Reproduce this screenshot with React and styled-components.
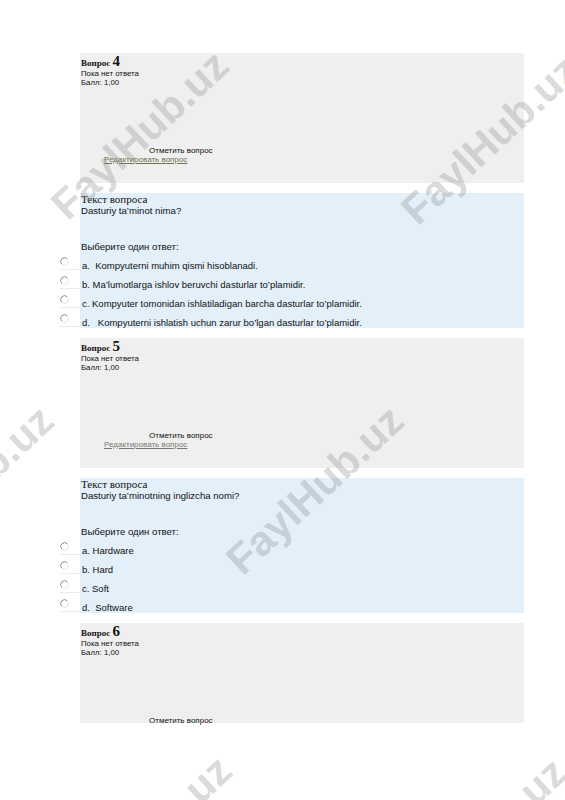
import React from 'react'
import styled, { createGlobalStyle } from 'styled-components'

const GlobalStyle = createGlobalStyle`
  body {
    margin: 0;
    background: #fff;
    font-family: "Liberation Sans", Arial, sans-serif;
    color: #111;
  }
`

const questions = [
  {
    num: 4,
    linkColor: '#6c744f',
    text: 'Dasturiy ta\u2019minot nima?',
    options: [
      'a.  Kompyuterni muhim qismi hisoblanadi.',
      'b. Ma\u2019lumotlarga ishlov beruvchi dasturlar to\u2019plamidir.',
      'c. Kompyuter tomonidan ishlatiladigan barcha dasturlar to\u2019plamidir.',
      'd.   Kompyuterni ishlatish uchun zarur bo\u2019lgan dasturlar to\u2019plamidir.',
    ],
  },
  {
    num: 5,
    linkColor: '#7a7a72',
    text: 'Dasturiy ta\u2019minotning inglizcha nomi?',
    options: ['a. Hardware', 'b. Hard', 'c. Soft', 'd.  Software'],
  },
]

const marks = [
  { x: 140, y: 135 },
  { x: 490, y: 140 },
  { x: -35, y: 490 },
  { x: 315, y: 490 },
  { x: 143, y: 840 },
  { x: 478, y: 842 },
]

export default function App() {
  return (
    <>
      <GlobalStyle />
      <Page>
        {questions.map(q => (
          <React.Fragment key={q.num}>
            <InfoPanel num={q.num} linkColor={q.linkColor} />
            <QuestionPanel>
              <Caption>Текст вопроса</Caption>
              <QText>{q.text}</QText>
              <Prompt>Выберите один ответ:</Prompt>
              <Options>
                {q.options.map(o => (
                  <Option key={o}>
                    <RadioCell><Radio /></RadioCell>
                    <OptionText>{o}</OptionText>
                  </Option>
                ))}
              </Options>
            </QuestionPanel>
          </React.Fragment>
        ))}
        <InfoPanel num={6} short />
        {marks.map((m, i) => (
          <Watermark key={i} style={{ left: m.x, top: m.y }}>FaylHub.uz</Watermark>
        ))}
      </Page>
    </>
  )
}

const InfoPanel = ({ num, linkColor, short }) => (
  <Info $short={short}>
    <Heading>Вопрос <Num>{num}</Num></Heading>
    <Small>Пока нет ответа</Small>
    <Small>Балл: 1,00</Small>
    <Flag>Отметить вопрос</Flag>
    {!short && <EditLink $color={linkColor}>Редактировать вопрос</EditLink>}
  </Info>
)

const Radio = () => (
  <svg width="9" height="9" viewBox="0 0 9 9">
    <circle cx="4.5" cy="4.5" r="3.8" fill="#fff" />
    <path d="M7.2 1.8 A3.8 3.8 0 0 0 1.8 7.2" fill="none" stroke="#8a8a8a" strokeWidth="1" />
    <path d="M1.8 7.2 A3.8 3.8 0 0 0 7.2 1.8" fill="none" stroke="#e2e2e2" strokeWidth="1" />
  </svg>
)

const Page = styled.div`
  position: relative;
  height: 800px;
  overflow: hidden;
  padding: 53px 0 0 80px;
  box-sizing: border-box;
  display: flex;
  flex-direction: column;
  gap: 10px;
`

const Info = styled.div`
  width: 444px;
  height: ${p => (p.$short ? '100px' : '130px')};
  flex-shrink: 0;
  box-sizing: border-box;
  background: #efefef;
  padding: 2px 0 0 1px;
`

const Heading = styled.div`
  font-family: "Liberation Serif", "Times New Roman", serif;
  font-weight: bold;
  font-size: 9px;
  line-height: 12px;
`

const Num = styled.span`
  font-size: 15px;
`

const Small = styled.div`
  font-size: 7.8px;
  line-height: 9px;
`

const Flag = styled.div`
  font-size: 8px;
  line-height: 9px;
  margin-top: 59px;
  padding-left: 68px;
`

const EditLink = styled.div`
  font-size: 8px;
  line-height: 9px;
  padding-left: 23px;
  color: ${p => p.$color};
  text-decoration: underline;
`

const QuestionPanel = styled.div`
  width: 444px;
  height: 135px;
  flex-shrink: 0;
  box-sizing: border-box;
  background: #e3eff9;
  padding: 0 0 0 1px;
`

const Caption = styled.div`
  font-family: "Liberation Serif", "Times New Roman", serif;
  font-size: 11px;
  line-height: 12px;
`

const QText = styled.div`
  font-size: 9.6px;
  line-height: 11px;
`

const Prompt = styled.div`
  font-size: 9.6px;
  line-height: 12px;
  margin-top: 25px;
`

const Options = styled.div`
  display: flex;
  flex-direction: column;
  gap: 5px;
  margin-top: 4px;
`

const Option = styled.div`
  display: flex;
  height: 14px;
  margin-left: -21px;
`

const RadioCell = styled.div`
  width: 20px;
  height: 13px;
  border-bottom: 1px solid #ececec;
  box-sizing: border-box;
  svg { display: block; }
`

const OptionText = styled.div`
  font-size: 9.5px;
  line-height: 12px;
  padding: 3px 0 0 2px;
  white-space: pre;
`

const Watermark = styled.span`
  position: absolute;
  transform: translate(-50%, -50%) rotate(-43deg);
  font-family: "Liberation Sans", Arial, sans-serif;
  font-weight: bold;
  font-size: 42px;
  color: rgba(130, 130, 130, 0.3);
  white-space: nowrap;
  pointer-events: none;
`
